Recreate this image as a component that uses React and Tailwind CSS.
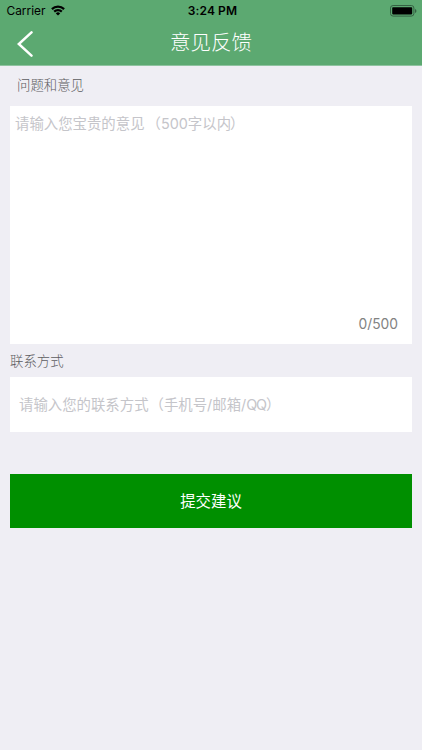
import React from 'react'

function WifiIcon() {
  return (
    <svg width="14" height="11" viewBox="0 0 14 11" fill="none" stroke="#000" strokeWidth="2.2">
      <path d="M0.9 4.1a8.7 8.7 0 0 1 12.2 0" />
      <path d="M3.2 6.6a5.4 5.4 0 0 1 7.6 0" />
      <path d="M7 10.6L4.8 8.4a3 3 0 0 1 4.4 0z" fill="#000" stroke="none" />
    </svg>
  )
}

function BatteryIcon() {
  return (
    <svg width="27" height="12" viewBox="0 0 27 12">
      <rect x="0.5" y="0.5" width="23.4" height="10.6" rx="2.6" fill="none" stroke="#356143" />
      <rect x="2.2" y="2.2" width="20" height="7.2" rx="0.8" fill="#000" />
      <path d="M25 4v4a2.1 2.1 0 0 0 0-4z" fill="#356143" />
    </svg>
  )
}

function StatusBar() {
  return (
    <div className="grid h-[21px] grid-cols-3 items-center pl-[6px] pr-[5px] text-black">
      <div className="flex items-center gap-[6px]">
        <span className="pl-[0.5px] pt-px text-[11.9px] leading-none">Carrier</span>
        <WifiIcon />
      </div>
      <span className="pl-[2px] pt-px text-center text-[12px] font-semibold leading-none tracking-[0.1px]">3:24 PM</span>
      <div className="flex justify-end">
        <BatteryIcon />
      </div>
    </div>
  )
}

function App() {
  return (
    <div className="flex h-[750px] w-[422px] flex-col overflow-hidden bg-[#efeef4] font-[Inter,'Noto_Sans_CJK_SC',sans-serif]">
      {/* Header */}
      <header className="h-[66px] border-b border-[#8fc3a0] bg-[#5ca971]">
        <StatusBar />
        <div className="grid h-11 grid-cols-3 items-center">
          <button className="pl-[17px] pt-px" aria-label="返回">
            <svg width="16" height="26" viewBox="0 0 16 26" fill="none" stroke="#fff" strokeWidth="2.5">
              <path d="M14.5 1.4L1.8 13L14.5 24.6" strokeLinecap="round" />
            </svg>
          </button>
          <h1 className="text-center text-[20.5px] font-light leading-[42px] text-white">意见反馈</h1>
        </div>
      </header>

      <main className="flex flex-col px-[10px]">
        <h2 className="h-10 pl-[7px] text-[13.4px] font-light leading-[38px] text-[#5c5c60]">问题和意见</h2>

        {/* Feedback text */}
        <div className="flex h-[238px] flex-col justify-between bg-white pl-[5px] pr-[14px]">
          <p className="pt-[7px] text-[14.4px] leading-[22px] text-[#c5c5ca]">
            请输入您宝贵的意<span className="tracking-[2px]">见</span>（500字以<span className="tracking-[-1px]">内</span>）
          </p>
          <span className="pb-[9px] text-right text-[13.8px] leading-[22px] text-[#828282]">0/500</span>
        </div>

        <h2 className="h-[33px] text-[13.4px] font-light leading-[35px] text-[#5c5c60]">联系方式</h2>

        {/* Contact */}
        <div className="flex h-[55px] items-center bg-white pl-[9px]">
          <p className="text-[14.4px] leading-[22px] text-[#c5c5ca]">
            请输入您的联系方<span className="tracking-[1px]">式</span>（手机号/邮箱/<span className="tracking-[-1.2px]">QQ</span>）
          </p>
        </div>

        <button className="mt-[42px] h-[54px] bg-[#008f00] pt-px text-[15.4px] leading-[54px] text-white">
          提交建议
        </button>
      </main>
    </div>
  )
}

export default App
